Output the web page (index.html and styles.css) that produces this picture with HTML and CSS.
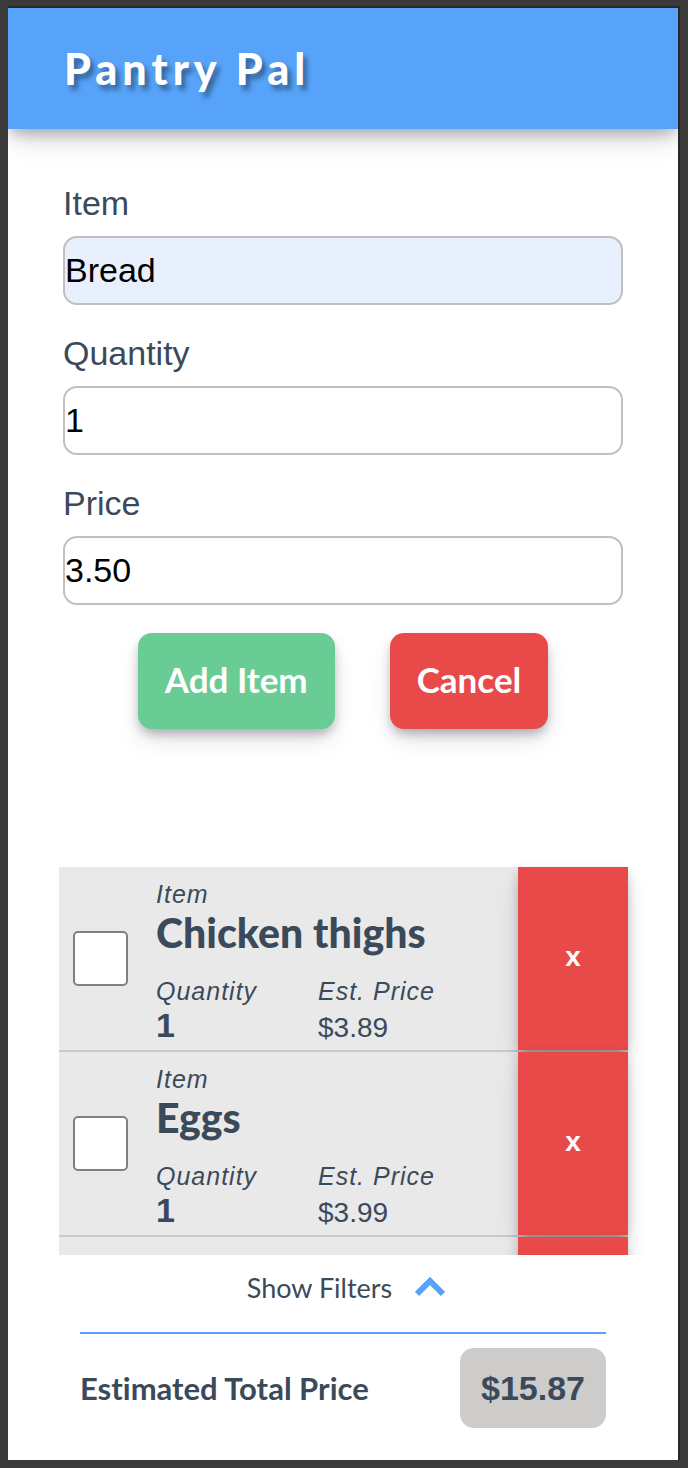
FILE: index.html
```html
<!DOCTYPE html>
<html lang="en">
<head>
<meta charset="utf-8">
<meta name="viewport" content="width=device-width, initial-scale=1">
<title>Pantry Pal</title>
<link rel="stylesheet" href="styles.css">
</head>
<body>
<div class="app">
  <header class="header"><h1 class="title">Pantry Pal</h1></header>
  <form class="form">
    <div class="field">
      <label class="field-label" for="item">Item</label>
      <input class="field-input filled" id="item" type="text" value="Bread">
    </div>
    <div class="field">
      <label class="field-label" for="quantity">Quantity</label>
      <input class="field-input" id="quantity" type="text" inputmode="numeric" value="1">
    </div>
    <div class="field">
      <label class="field-label" for="price">Price</label>
      <input class="field-input" id="price" type="text" inputmode="decimal" value="3.50">
    </div>
    <div class="actions">
      <button class="button add" type="button">Add Item</button>
      <button class="button cancel" type="button">Cancel</button>
    </div>
  </form>
  <main class="list-area">
    <ul class="list">
      <li class="row">
        <input class="check" type="checkbox" aria-label="Chicken thighs">
        <div class="details">
          <div class="caption">Item</div>
          <h2 class="name">Chicken thighs</h2>
          <div class="numbers">
            <div><div class="caption">Quantity</div><div class="count">1</div></div>
            <div><div class="caption">Est. Price</div><div class="cost">$3.89</div></div>
          </div>
        </div>
        <button class="delete" type="button">x</button>
      </li>
      <li class="row">
        <input class="check" type="checkbox" aria-label="Eggs">
        <div class="details">
          <div class="caption">Item</div>
          <h2 class="name">Eggs</h2>
          <div class="numbers">
            <div><div class="caption">Quantity</div><div class="count">1</div></div>
            <div><div class="caption">Est. Price</div><div class="cost">$3.99</div></div>
          </div>
        </div>
        <button class="delete" type="button">x</button>
      </li>
      <li class="row">
        <div class="details">
          <div class="caption">Item</div>
        </div>
        <button class="delete" type="button" aria-label="Delete"></button>
      </li>
    </ul>
  </main>
  <footer class="footer">
    <button class="filters" type="button">Show Filters
      <svg class="chevron" width="30" height="22" viewBox="0 0 30 22" aria-hidden="true"><path d="M2 17 15 4l13 13" fill="none" stroke="#56a3f9" stroke-width="6"/></svg>
    </button>
    <div class="total">
      <span class="total-label">Estimated Total Price</span>
      <output class="total-value">$15.87</output>
    </div>
  </footer>
</div>
</body>
</html>
```
FILE: styles.css
```css
* { box-sizing: border-box; }

body {
  margin: 0;
  padding: 8px 10px 8px 8px;
  background: #3a3a3a;
  color: #3b4a5a;
  font-family: "Liberation Sans", Arial, sans-serif;
}

.app {
  display: flex;
  flex-direction: column;
  height: calc(100vh - 16px);
  background: #fff;
  box-shadow: 1px -1px 0 1px #282828;
}

.header {
  flex: none;
  padding: 32px 56px;
  background: #56a3f9;
  box-shadow: 0 13px 27px -5px rgba(50, 50, 93, 0.2), 0 7px 14px -3px rgba(0, 0, 0, 0.28);
  clip-path: inset(0 0 -50px 0);
}

.title {
  margin: 0;
  color: #fff;
  font: 900 43px/57px Lato, sans-serif;
  letter-spacing: 5px;
  text-shadow: 4px 5px 5px rgba(0, 0, 0, 0.4);
}

.form {
  flex: none;
  display: flex;
  flex-direction: column;
  gap: 28px;
  padding: 54px 55px 0;
}

.field {
  display: flex;
  flex-direction: column;
  gap: 13px;
}

.field-label { font-size: 34px; line-height: 40px; }

.field-input {
  width: 100%;
  height: 69px;
  padding: 0;
  border: 2px solid #c0c0c0;
  border-radius: 14px;
  background: #fff;
  color: #000;
  font: 34px/40px "Liberation Sans", Arial, sans-serif;
}

.filled { background: #e8effd; }

.actions {
  display: flex;
  justify-content: center;
  gap: 55px;
}

.button {
  height: 96px;
  padding: 0 27px 4px;
  border: 0;
  border-radius: 14px;
  color: #fff;
  font: 700 35px/40px Lato, sans-serif;
  box-shadow: 0 13px 27px -5px rgba(50, 50, 93, 0.15), 0 6px 12px -2px rgba(0, 0, 0, 0.3);
}

.add { background: #69cc94; }
.cancel, .delete { background: #e84a49; }

.list-area {
  flex: 1;
  min-height: 0;
  margin: 110px 32px 0;
  padding: 28px 18px 0 19px;
  overflow: hidden;
}

.list {
  margin: 0;
  padding: 0;
  list-style: none;
}

.row {
  display: flex;
  align-items: center;
  gap: 28px;
  height: 185px;
  padding-left: 14px;
  border-bottom: 2px solid #c9c9c9;
  background: #e9e9e9;
}

.check {
  appearance: none;
  flex: none;
  width: 55px;
  height: 55px;
  margin: 0;
  border: 2px solid #808080;
  border-radius: 5px;
  background: #fff;
}

.row > .details:first-child { padding-left: 83px; }

.details {
  flex: 1;
  align-self: flex-start;
  padding-top: 12px;
}

.caption {
  font-size: 25px;
  font-style: italic;
  line-height: 30px;
  letter-spacing: 1px;
}

.name {
  margin: 0 0 19px;
  font: 900 41px/48px Lato, sans-serif;
}

.numbers {
  display: grid;
  grid-template-columns: 162px auto;
}

.count { font-size: 34px; font-weight: 700; line-height: 38px; }
.cost { font-size: 28px; line-height: 44px; }

.delete {
  flex: none;
  align-self: stretch;
  width: 110px;
  padding: 0 0 4px;
  border: 0;
  color: #fff;
  font: 700 28px/32px "Liberation Sans", Arial, sans-serif;
  box-shadow: 0 13px 27px -5px rgba(50, 50, 93, 0.15), 0 6px 12px -2px rgba(0, 0, 0, 0.3);
}

.footer {
  flex: none;
  padding: 13px 72px 32px;
}

.filters {
  display: flex;
  align-items: center;
  justify-content: center;
  gap: 23px;
  width: 100%;
  height: 66px;
  padding: 0 0 24px 6px;
  border: 0;
  border-bottom: 2px solid #56a3f9;
  background: none;
  color: #3b4a5a;
  font: 400 27px/40px Lato, sans-serif;
}

.total {
  display: flex;
  align-items: center;
  justify-content: space-between;
  padding-top: 14px;
}

.total-label {
  font: 700 31px/40px Lato, sans-serif;
  font-variant-ligatures: none;
}

.total-value {
  padding: 20px 21px;
  border-radius: 14px;
  background: #cdccca;
  font-size: 34px;
  font-weight: 700;
  line-height: 40px;
}
```
